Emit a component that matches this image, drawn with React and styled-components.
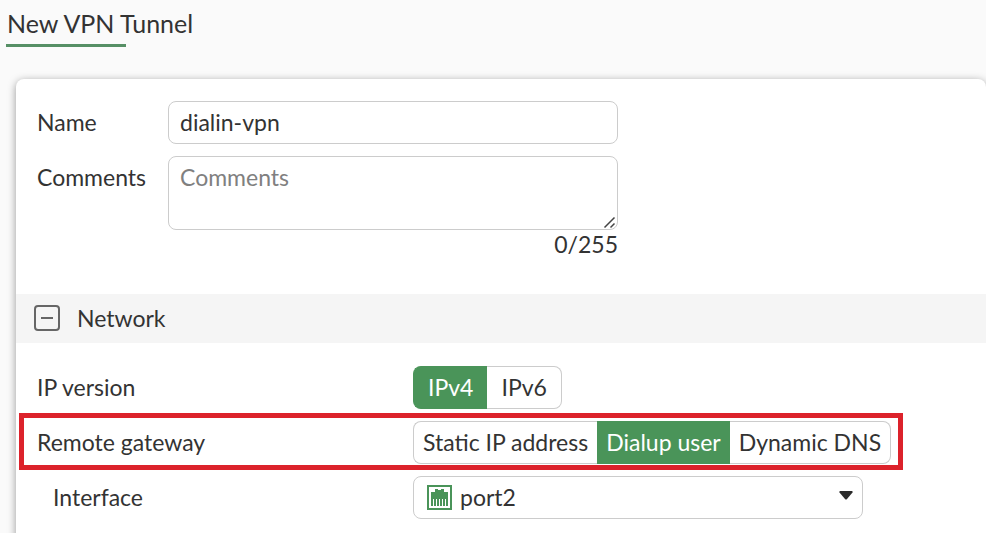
import React, { useState } from "react";
import styled, { createGlobalStyle } from "styled-components";

const App = () => {
  const [name, setName] = useState("dialin-vpn");
  const [comments, setComments] = useState("");
  const [open, setOpen] = useState(true);
  const [ipVersion, setIpVersion] = useState("IPv4");
  const [gateway, setGateway] = useState("Dialup user");
  const [port, setPort] = useState("port2");

  return (
    <Page>
      <GlobalStyle />
      <Title>New VPN Tunnel</Title>
      <Card>
        <General>
          <Row>
            <Label htmlFor="name">Name</Label>
            <Field>
              <TextInput id="name" type="text" value={name} onChange={(e) => setName(e.target.value)} />
            </Field>
          </Row>
          <Row>
            <Label htmlFor="comments">Comments</Label>
            <Field>
              <TextArea
                id="comments"
                placeholder="Comments"
                maxLength={255}
                value={comments}
                onChange={(e) => setComments(e.target.value)}
              />
              <Grip viewBox="0 0 14 14" aria-hidden="true">
                <path d="M1.5 12.5 L11.5 2.5 M7.5 12.5 L11.5 8.5" />
              </Grip>
              <Counter>{comments.length}/255</Counter>
            </Field>
          </Row>
        </General>

        <SectionHeader>
          <Toggle type="button" aria-expanded={open} onClick={() => setOpen(!open)}>
            <ToggleIcon viewBox="0 0 28 28" aria-hidden="true">
              <rect x="2" y="2" width="24" height="24" rx="3" />
              <path d={open ? "M8 14 H20" : "M8 14 H20 M14 8 V20"} />
            </ToggleIcon>
            Network
          </Toggle>
        </SectionHeader>

        {open && (
          <Network>
            <Row $wide>
              <Label as="span" id="ip-version">IP version</Label>
              <Segmented
                name="ip-version"
                options={["IPv4", "IPv6"]}
                value={ipVersion}
                onChange={setIpVersion}
                roomy
              />
            </Row>
            <HighlightedRow $wide>
              <Label as="span" id="gateway">Remote gateway</Label>
              <Segmented
                name="gateway"
                options={["Static IP address", "Dialup user", "Dynamic DNS"]}
                value={gateway}
                onChange={setGateway}
              />
            </HighlightedRow>
            <Row $wide>
              <Label htmlFor="interface" $nested>Interface</Label>
              <Field>
                <Select id="interface" value={port} onChange={(e) => setPort(e.target.value)}>
                  <option>port1</option>
                  <option>port2</option>
                  <option>port3</option>
                </Select>
                <PortIcon viewBox="0 0 25 25" aria-hidden="true">
                  <rect x="1" y="1" width="23" height="23" fill="#fff" stroke="#4a9459" strokeWidth="2" />
                  <path
                    fill="#4a9459"
                    d="M4 21 V7 H8 V4 H11 V5 H14 V4 H17 V7 H21 V21 H19 V14 H18 V21 H16 V14 H15 V21 H13 V14 H12 V21 H10 V14 H9 V21 H7 V14 H6 V21 Z"
                  />
                </PortIcon>
                <Caret viewBox="0 0 14 9" aria-hidden="true">
                  <path d="M1 0 H13 Q14 0 13.5 1.5 L8 8 Q7 9 6 8 L0.5 1.5 Q0 0 1 0 Z" />
                </Caret>
              </Field>
            </Row>
          </Network>
        )}
      </Card>
    </Page>
  );
};

const Segmented = ({ name, options, value, onChange, roomy }) => (
  <Segments role="radiogroup" aria-labelledby={name}>
    {options.map((option) => (
      <Segment key={option} $active={option === value} $roomy={roomy}>
        <Radio type="radio" name={name} checked={option === value} onChange={() => onChange(option)} />
        {option}
      </Segment>
    ))}
  </Segments>
);

export default App;

const GlobalStyle = createGlobalStyle`
  *, *::after {
    box-sizing: border-box;
  }
  body {
    margin: 0;
    background-color: #fafafa;
    color: #333;
    font-family: Lato, sans-serif;
    font-size: 23px;
    line-height: 28px;
  }
  input, textarea, select, button {
    color: inherit;
    font: inherit;
  }
`

const Page = styled.main`
  height: 100vh;
  overflow: hidden;
  display: flex;
  flex-direction: column;
`

const Title = styled.h1`
  margin: 0 0 32px 6px;
  padding: 9px 0 10px 1px;
  font-size: 25px;
  font-weight: 400;
  background: linear-gradient(#568f65, #568f65) left bottom / 120px 3px no-repeat;
`

const Card = styled.form`
  flex: 1 0 auto;
  margin-left: 16px;
  background-color: white;
  border-radius: 8px 8px 0 0;
  box-shadow: 0 2px 8px rgba(0, 0, 0, 0.4);
`

const General = styled.div`
  display: grid;
  gap: 12px;
  padding: 22px 21px 36px;
`

const Network = styled.div`
  display: grid;
  gap: 12px;
  padding: 23px 21px;
`

const Row = styled.div`
  position: relative;
  display: grid;
  grid-template-columns: ${(props) => (props.$wide ? "376px" : "131px")} minmax(0, 450px);
`

const HighlightedRow = styled(Row)`
  &::after {
    content: "";
    position: absolute;
    top: -8px;
    bottom: -6px;
    left: -18px;
    width: 884px;
    border: 5px solid #dc222b;
    pointer-events: none;
  }
`

const Label = styled.label`
  padding-top: 7px;
  padding-left: ${(props) => (props.$nested ? "16px" : "0")};
`

const Field = styled.div`
  position: relative;
`

const TextInput = styled.input`
  display: block;
  width: 100%;
  height: 43px;
  padding: 0 11px 2px;
  border: 1px solid #ccc;
  border-radius: 8px;
  background-color: white;
  &:focus{
    outline: 0;
    border-color: #4a9459;
  }
`

const TextArea = styled(TextInput).attrs({ as: "textarea" })`
  height: 74px;
  padding: 6px 11px;
  resize: none;
  &::placeholder{
    color: #808080;
  }
`

const Grip = styled.svg`
  position: absolute;
  top: 59px;
  right: 1px;
  width: 14px;
  height: 14px;
  stroke: #444;
  stroke-width: 1.5;
  pointer-events: none;
`

const Counter = styled.div`
  text-align: right;
`

const SectionHeader = styled.h2`
  margin: 0;
  background-color: #f5f5f5;
  font-size: 23px;
  font-weight: 400;
`

const Toggle = styled.button`
  display: flex;
  align-items: center;
  gap: 16px;
  width: 100%;
  height: 49px;
  padding: 0 17px 2px;
  border: none;
  background: none;
  cursor: pointer;
`

const ToggleIcon = styled.svg`
  width: 28px;
  height: 28px;
  fill: none;
  stroke: #666;
  stroke-width: 2;
`

const Segments = styled.div`
  display: flex;
`

const Segment = styled.label`
  display: flex;
  align-items: center;
  height: 43px;
  padding: 0 ${(props) => (props.$roomy ? "14px" : "9px")} 2px;
  border: 1px solid ${(props) => (props.$active ? "#4a9459" : "#ccc")};
  background-color: ${(props) => (props.$active ? "#4a9459" : "white")};
  color: ${(props) => (props.$active ? "white" : "#333")};
  white-space: nowrap;
  cursor: pointer;
  &:first-child{
    border-radius: 8px 0 0 8px;
  }
  &:last-child{
    border-radius: 0 8px 8px 0;
  }
  &:not(:first-child){
    border-left: none;
  }
  &:not(:last-child){
    border-right: none;
  }
`

const Radio = styled.input`
  position: absolute;
  width: 1px;
  height: 1px;
  margin: 0;
  opacity: 0;
`

const Select = styled.select`
  display: block;
  width: 100%;
  height: 43px;
  padding: 0 40px 2px 46px;
  border: 1px solid #ccc;
  border-radius: 8px;
  background-color: white;
  appearance: none;
`

const PortIcon = styled.svg`
  position: absolute;
  top: 9px;
  left: 14px;
  width: 25px;
  height: 25px;
  pointer-events: none;
`

const Caret = styled.svg`
  position: absolute;
  top: 15px;
  right: 10px;
  width: 14px;
  height: 9px;
  fill: #2b2b2b;
  pointer-events: none;
`
